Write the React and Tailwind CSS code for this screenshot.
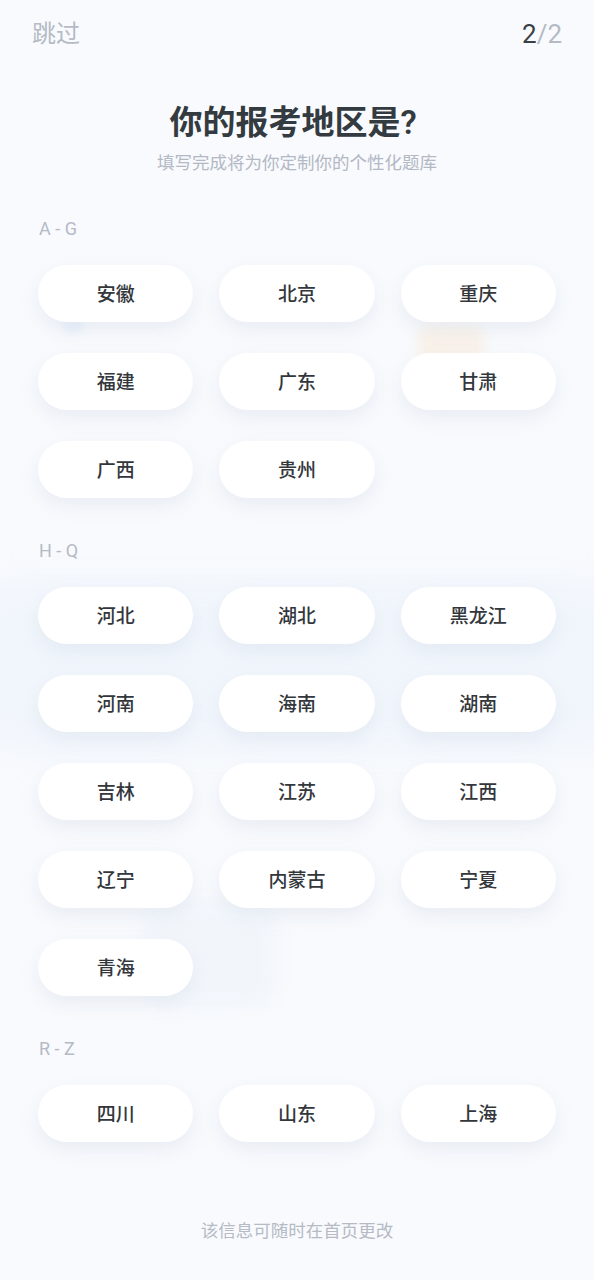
const groups = [
  { label: "A - G", items: ["安徽", "北京", "重庆", "福建", "广东", "甘肃", "广西", "贵州"] },
  {
    label: "H - Q",
    items: ["河北", "湖北", "黑龙江", "河南", "海南", "湖南", "吉林", "江苏", "江西", "辽宁", "内蒙古", "宁夏", "青海"],
  },
  { label: "R - Z", items: ["四川", "山东", "上海"] },
];

const font = { fontFamily: 'Roboto, "Noto Sans CJK SC", sans-serif' };

export default function App() {
  return (
    <div className="relative min-h-[1280px] w-full overflow-hidden bg-[#f8fafd]" style={font}>
      {/* faint blurred background illustration */}
      <div className="pointer-events-none absolute inset-0">
        <div className="absolute left-[62px] top-[318px] h-[14px] w-[22px] rounded-full bg-[#d8e6f8] opacity-50 blur-[4px]" />
        <div className="absolute left-[418px] top-[325px] h-[36px] w-[66px] rounded-[10px] bg-[#fbe6cc] opacity-40 blur-[6px]" />
        <div className="absolute left-[-40px] top-[575px] h-[180px] w-[680px] rounded-[60px] bg-[#eef4fc] opacity-60 blur-[14px]" />
        <div className="absolute left-[140px] top-[900px] h-[110px] w-[140px] rounded-[30px] bg-[#edf3fb] opacity-50 blur-[8px]" />
      </div>

      <div className="relative">
        <div className="flex h-[68px] items-center justify-between px-[32px]">
          <span className="text-[24px] text-[#b5bac5]">跳过</span>
          <span className="text-[26px]">
            <span className="text-[#3a3f45]">2</span>
            <span className="text-[#b5bac5]">/2</span>
          </span>
        </div>

        <h1 className="mt-[35px] pr-[8px] text-center text-[33px] font-semibold leading-[40px] text-[#333a40]">你的报考地区是?</h1>
        <p className="mt-[9px] text-center text-[17.5px] leading-[22px] text-[#b3b8c4]">填写完成将为你定制你的个性化题库</p>

        <div className="mt-[43px] flex flex-col gap-[41px] px-[38px]">
          {groups.map((g) => (
            <section key={g.label}>
              <div className="pl-px text-[18px] leading-[24px] text-[#b5bac6]">{g.label}</div>
              <div className="mt-[24px] grid grid-cols-3 gap-x-[26px] gap-y-[31px]">
                {g.items.map((name) => (
                  <button
                    key={name}
                    className="flex h-[57px] items-center justify-center rounded-full bg-white pt-[3px] text-[19px] font-medium text-[#33373c] shadow-[0_8px_18px_rgba(205,214,228,0.35)]"
                  >
                    {name}
                  </button>
                ))}
              </div>
            </section>
          ))}
        </div>

        <p className="mt-[77px] text-center text-[17.5px] leading-[24px] text-[#b5bac5]">该信息可随时在首页更改</p>
      </div>
    </div>
  );
}
